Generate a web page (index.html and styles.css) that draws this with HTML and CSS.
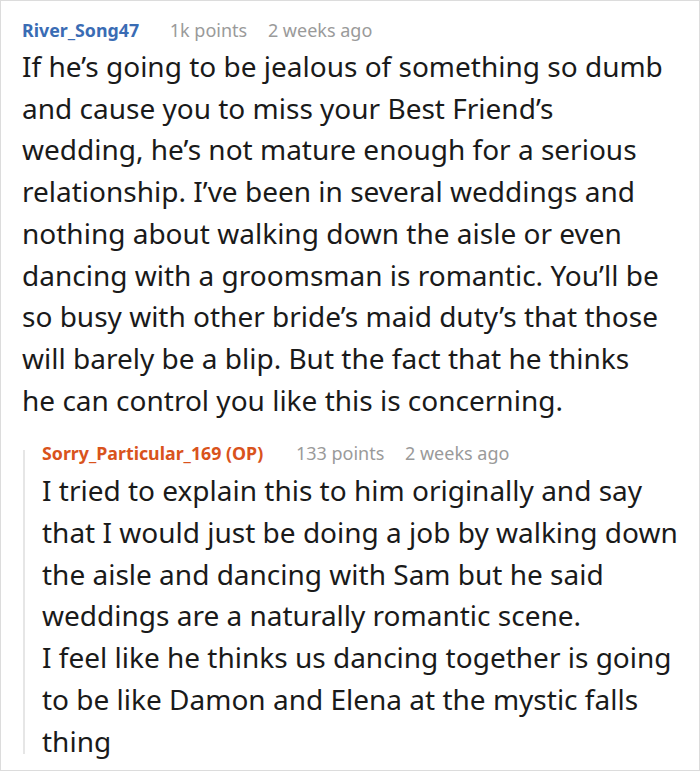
FILE: index.html
```html
<!DOCTYPE html>
<html lang="en">
<head>
<meta charset="utf-8">
<title>Comments</title>
<link rel="stylesheet" href="styles.css">
</head>
<body>
<div class="thread">
  <div class="comment">
    <div class="meta">
      <span class="author">River_Song47</span>
      <span class="points">1k points</span>
      <span class="time">2 weeks ago</span>
    </div>
    <p class="body main-body">If he’s going to be jealous of something so dumb and cause you to miss your Best Friend’s wedding, he’s not mature enough for a serious relationship. I’ve been in several weddings and nothing about walking down the aisle or even dancing with a groomsman is romantic. You’ll be so busy with other bride’s maid duty’s that those will barely be a blip. But the fact that he thinks he can control you like this is concerning.</p>
    <div class="reply">
      <div class="meta">
        <span class="author op">Sorry_Particular_169 (OP)</span>
        <span class="points">133 points</span>
        <span class="time">2 weeks ago</span>
      </div>
      <p class="body">I tried to explain this to him originally and say that I would just be doing a job by walking down the aisle and dancing with Sam but he said weddings are a naturally romantic scene.<br>I feel like he thinks us dancing together is going to be like Damon and Elena at the mystic falls thing</p>
    </div>
  </div>
</div>
</body>
</html>
```

FILE: styles.css
```css
html, body {
  margin: 0;
  padding: 0;
  background: #fff;
}
body {
  font-family: "Noto Sans", "Open Sans", sans-serif;
  color: #1a1a1a;
}
.thread {
  width: 700px;
  height: 771px;
  box-sizing: border-box;
  border: 1px solid #dcdcdc;
  padding: 17px 20px 0 21px;
  overflow: hidden;
}
.meta {
  font-size: 18px;
  line-height: 24px;
  white-space: nowrap;
}
.author {
  font-size: 17.8px;
  font-weight: 700;
  color: #3a6cb4;
  margin-right: 26px;
}
.author.op {
  color: #d9531c;
  margin-right: 28px;
}
.points {
  color: #9a9a9a;
  margin-right: 16px;
}
.time {
  color: #9a9a9a;
}
.body {
  margin: 4px 0 0;
  font-size: 28px;
  line-height: 41.7px;
}
.main-body {
  max-width: 642px;
}
.reply {
  position: relative;
  margin-top: 20px;
  padding-left: 20px;
}
.reply::before {
  content: "";
  position: absolute;
  left: 1px;
  top: 9px;
  bottom: 8px;
  width: 2px;
  background: #e6e6e6;
}
.reply .body {
  margin-top: 5px;
}
```
